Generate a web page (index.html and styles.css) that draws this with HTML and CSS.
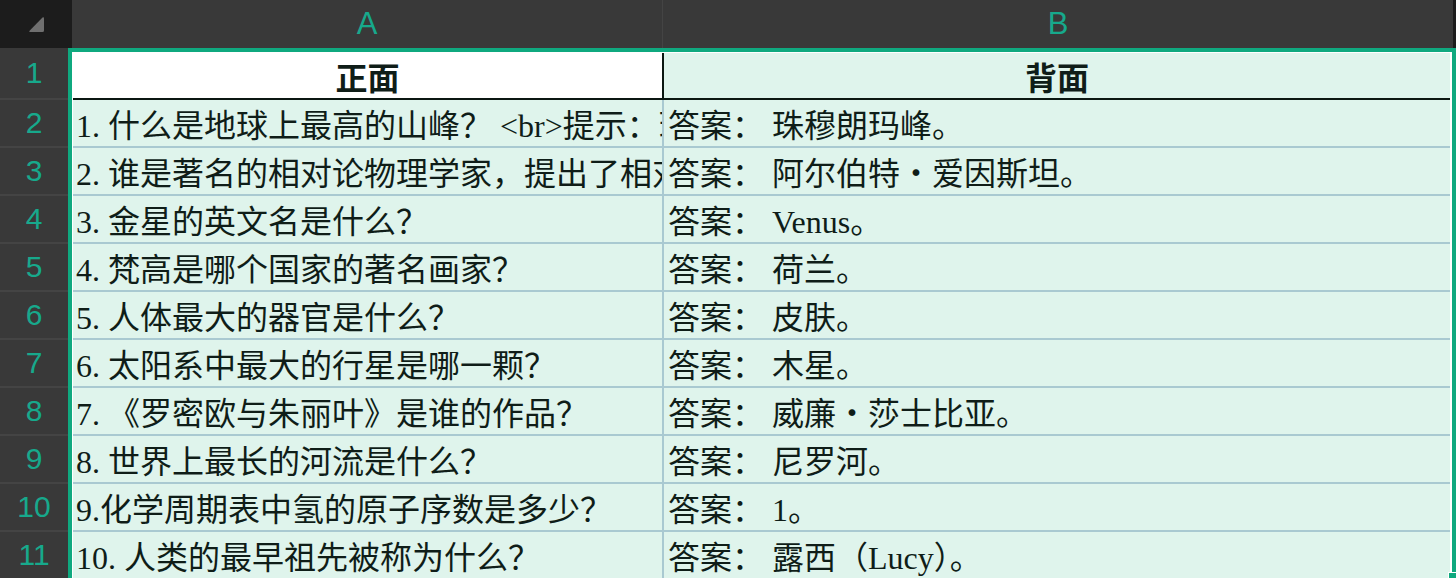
FILE: index.html
```html
<!DOCTYPE html>
<html lang="zh-CN">
<head>
  <meta charset="UTF-8">
  <title>闪卡表格</title>
  <link rel="stylesheet" href="styles.css">
</head>
<body>

  <div class="col-heads">
    <div class="corner">
      <svg width="20" height="19" viewBox="0 0 20 19">
        <path d="M16.5 2.5 Q18 1.5 18 3.5 L18 15.5 Q18 17 16.5 17 L4.5 17 Q2.5 17 3.8 15.5 Z" fill="#6f6f6f"/>
      </svg>
    </div>
    <div class="col-head col-a">A</div>
    <div class="col-head col-b">B</div>
    <div class="col-edge"></div>
  </div>

  <div class="sheet-body">
    <div class="row-heads">
      <div class="row-head first">1</div>
      <div class="row-head">2</div>
      <div class="row-head">3</div>
      <div class="row-head">4</div>
      <div class="row-head">5</div>
      <div class="row-head">6</div>
      <div class="row-head">7</div>
      <div class="row-head">8</div>
      <div class="row-head">9</div>
      <div class="row-head">10</div>
      <div class="row-head">11</div>
    </div>

    <div class="selection">
      <div class="grid">
        <div class="row title-row">
          <div class="cell a">正面</div>
          <div class="cell b">背面</div>
        </div>
        <div class="row">
          <div class="cell a">1. 什么是地球上最高的山峰？ &lt;br&gt;提示：珠穆朗玛峰位于喜马拉雅山脉。</div>
          <div class="cell b">答案： 珠穆朗玛峰。</div>
        </div>
        <div class="row">
          <div class="cell a">2. 谁是著名的相对论物理学家，提出了相对论？</div>
          <div class="cell b">答案： 阿尔伯特・爱因斯坦。</div>
        </div>
        <div class="row">
          <div class="cell a">3. 金星的英文名是什么？</div>
          <div class="cell b">答案： Venus。</div>
        </div>
        <div class="row">
          <div class="cell a">4. 梵高是哪个国家的著名画家？</div>
          <div class="cell b">答案： 荷兰。</div>
        </div>
        <div class="row">
          <div class="cell a">5. 人体最大的器官是什么？</div>
          <div class="cell b">答案： 皮肤。</div>
        </div>
        <div class="row">
          <div class="cell a">6. 太阳系中最大的行星是哪一颗？</div>
          <div class="cell b">答案： 木星。</div>
        </div>
        <div class="row">
          <div class="cell a">7. 《罗密欧与朱丽叶》是谁的作品？</div>
          <div class="cell b">答案： 威廉・莎士比亚。</div>
        </div>
        <div class="row">
          <div class="cell a">8. 世界上最长的河流是什么？</div>
          <div class="cell b">答案： 尼罗河。</div>
        </div>
        <div class="row">
          <div class="cell a">9.化学周期表中氢的原子序数是多少？</div>
          <div class="cell b">答案： 1。</div>
        </div>
        <div class="row">
          <div class="cell a">10. 人类的最早祖先被称为什么？</div>
          <div class="cell b">答案： 露西（Lucy）。</div>
        </div>
      </div>
      <div class="handle"></div>
    </div>
  </div>

</body>
</html>
```

FILE: styles.css
```css
html, body {
  margin: 0;
  height: 578px;
  overflow: hidden;
  background-color: #393939;
}

.col-heads {
  display: flex;
  height: 48px;
  background-color: #393939;
}

.corner {
  width: 72px;
  background-color: #1c1c1c;
  display: flex;
  align-items: center;
  justify-content: center;
}

.col-head {
  display: flex;
  align-items: center;
  justify-content: center;
  font-family: "Liberation Sans", Arial, sans-serif;
  font-size: 31px;
  color: #17a98c;
  box-sizing: border-box;
}

.col-a {
  width: 591px;
  border-right: 1px solid #444444;
}

.col-b {
  width: 790px;
}

.col-edge {
  flex: 1;
  background-color: #1c1c1c;
}

.sheet-body {
  display: flex;
  height: 530px;
}

.row-heads {
  width: 68px;
  flex-shrink: 0;
}

.row-head {
  height: 48px;
  box-sizing: border-box;
  border-bottom: 2px solid #444444;
  display: flex;
  align-items: center;
  justify-content: center;
  font-family: "Liberation Sans", Arial, sans-serif;
  font-size: 30px;
  color: #17a98c;
}

.row-head.first {
  height: 52px;
}

.selection {
  position: relative;
  flex: 1;
  border: 4px solid #0fa97f;
  border-bottom: none;
  padding: 1px 2px 0 1px;
  background-color: #ffffff;
}

.grid {
  display: flex;
  flex-direction: column;
  background-color: #dff4ec;
}

.row {
  display: flex;
  height: 48px;
  box-sizing: border-box;
  border-bottom: 2px solid #a9c9d1;
}

.cell {
  display: flex;
  align-items: center;
  box-sizing: border-box;
  padding-left: 3px;
  white-space: pre;
  overflow: hidden;
  font-family: "Liberation Serif", "Noto Sans CJK SC", serif;
  font-size: 32px;
  color: #0f1d18;
}

.cell.a {
  width: 591px;
  border-right: 2px solid #a9c9d1;
}

.cell.b {
  flex: 1;
  padding-left: 4px;
}

.title-row {
  height: 47px;
  border-bottom: 2px solid #0b1712;
}

.title-row .cell {
  justify-content: center;
  font-weight: bold;
  padding-left: 0;
}

.title-row .cell.a {
  background-color: #ffffff;
  border-right: 2px solid #0b1712;
}

.handle {
  position: absolute;
  right: -6px;
  top: 520px;
  width: 8px;
  height: 8px;
  background-color: #0fa97f;
  border: 1px solid #ffffff;
}
```
